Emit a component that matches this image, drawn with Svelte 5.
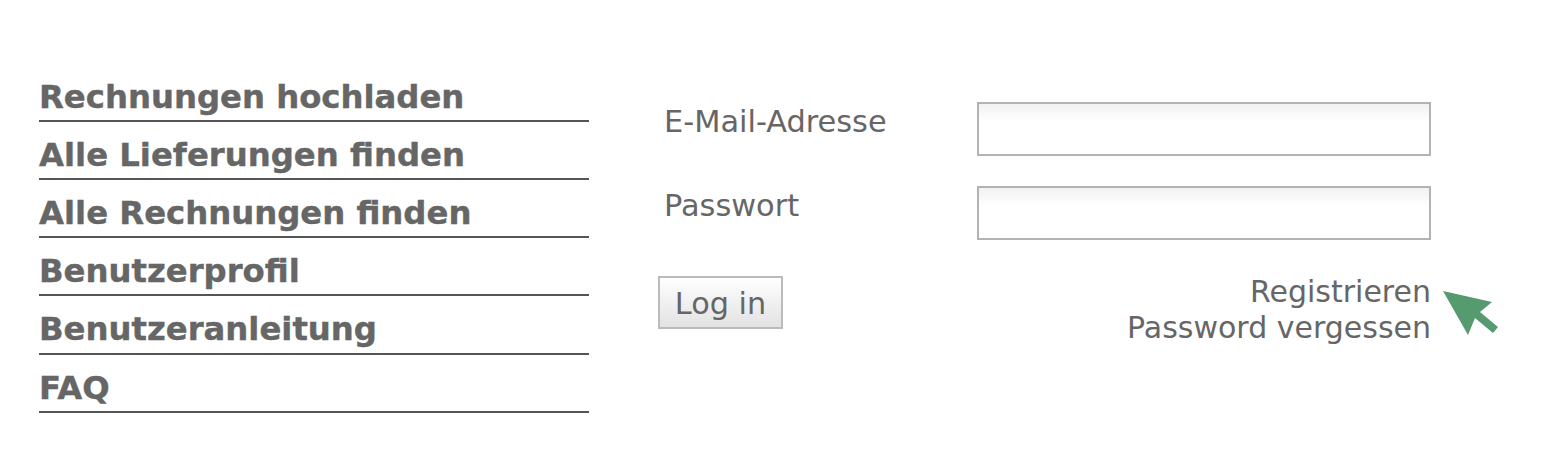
<script>
  const menu = ['Rechnungen hochladen', 'Alle Lieferungen finden', 'Alle Rechnungen finden', 'Benutzerprofil', 'Benutzeranleitung', 'FAQ'];
</script>

<main class="page">
  <nav class="menu">
    {#each menu as item}
      <a class="menu-item" href="#top">{item}</a>
    {/each}
  </nav>
  <form class="login">
    <div class="field">
      <label for="mail">E-Mail-Adresse</label>
      <input id="mail" type="text" />
    </div>
    <div class="field">
      <label for="pw">Passwort</label>
      <input id="pw" type="password" />
    </div>
    <div class="actions">
      <button type="button">Log in</button>
      <div class="links">
        <a href="#top">Registrieren</a>
        <a href="#top">Password vergessen</a>
      </div>
      <svg class="arrow" width="58" height="48" viewBox="0 0 58 48" aria-hidden="true">
        <path d="M1 0 L50 11 L38 21 L56 36 L51 42 L33 27 L26 44 Z" fill="#559b6f" />
      </svg>
    </div>
  </form>
</main>

<style>
  :global(body) {
    margin: 0;
    background: #fff;
    font-family: "DejaVu Sans", Verdana, sans-serif;
    color: #666;
  }
  .page {
    display: flex;
    padding: 72.6px 0 0 39px;
    height: 385px;
    box-sizing: content-box;
  }
  .menu {
    width: 550px;
    display: flex;
    flex-direction: column;
  }
  .menu-item {
    display: block;
    height: 47.2px;
    line-height: 48px;
    margin-bottom: 9px;
    border-bottom: 2px solid #555;
    font-size: 32.3px;
    font-weight: 700;
    color: #666;
    text-decoration: none;
    -webkit-text-stroke: 0.4px #666;
  }
  .login {
    margin-left: 69px;
    margin-top: 29.4px;
    width: 850px;
  }
  .field {
    display: flex;
    align-items: flex-start;
    height: 54px;
    margin-bottom: 30px;
    padding-left: 6px;
  }
  label {
    width: 313px;
    font-size: 30.4px;
    line-height: 40px;
  }
  input {
    width: 454px;
    height: 54px;
    box-sizing: border-box;
    border: 2px solid #b3b3b3;
    border-radius: 0;
    background: linear-gradient(#f1f1f1, #fff 35%);
    padding: 0;
  }
  .actions {
    display: flex;
    align-items: flex-start;
    margin-top: 36px;
  }
  button {
    width: 125px;
    height: 53px;
    box-sizing: border-box;
    border: 2px solid #bbb;
    border-radius: 0;
    background: linear-gradient(#fff, #e2e2e2);
    color: #666;
    font-family: inherit;
    font-size: 30.3px;
    padding: 3px 0 0;
  }
  .links {
    width: 648px;
    margin-top: -2px;
    display: flex;
    flex-direction: column;
    align-items: flex-end;
    font-size: 30px;
    line-height: 36px;
  }
  .links a {
    color: #666;
    text-decoration: none;
  }
  .arrow {
    margin: 15px 0 0 11px;
    flex: none;
  }
</style>
